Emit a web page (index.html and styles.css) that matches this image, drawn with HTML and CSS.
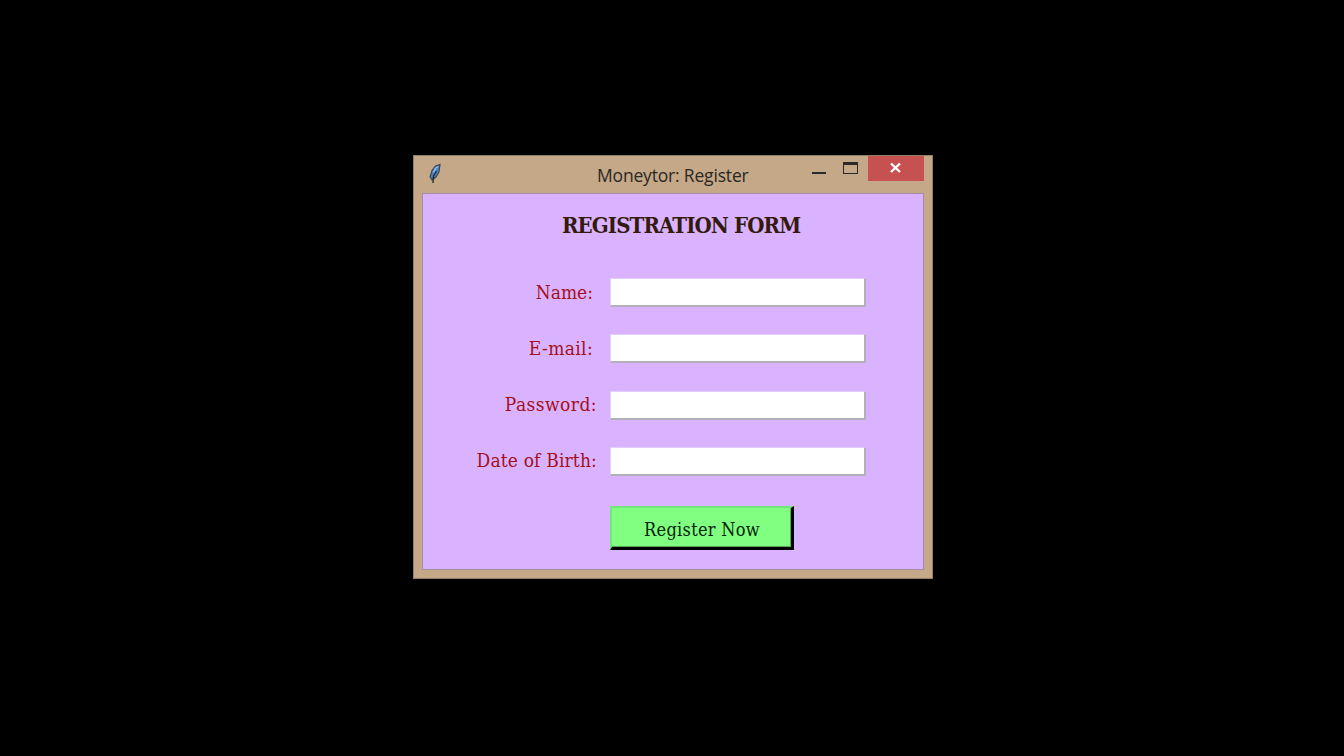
FILE: index.html
```html
<!DOCTYPE html>
<html lang="en">
<head>
<meta charset="utf-8">
<title>Moneytor: Register</title>
<link rel="stylesheet" href="styles.css">
</head>
<body>
<main class="window">
  <header class="titlebar">
    <svg class="feather" width="14" height="22" viewBox="0 0 14 22">
      <path d="M12 1.5 L7.5 3 L4 7.5 L2 14 L4 17 L8 14 L11 9 Z" fill="#4a82c4" stroke="#3a4350" stroke-width="1.1"/>
      <path d="M10 3.5 L7.5 5.5 L5.5 9.5" fill="none" stroke="#8abdf0" stroke-width="1.6"/>
      <path d="M8.5 8 L5.5 13 L5 20" fill="none" stroke="#25231f" stroke-width="1.3"/>
    </svg>
    <span class="caption">Moneytor: Register</span>
    <div class="controls">
      <svg width="112" height="25" viewBox="0 0 112 25">
        <rect x="0" y="16" width="14" height="2" fill="#2a2a2a"/>
        <path d="M31 6h15v12H31z M32 9v8h13V9z" fill="#2a2a2a" fill-rule="evenodd"/>
        <rect x="56" y="0" width="56" height="25" fill="#c75050"/>
        <path d="M79 7.5 L88 16 M88 7.5 L79 16" stroke="#fff" stroke-width="2.4"/>
      </svg>
    </div>
  </header>
  <form class="form">
    <h1 class="heading">REGISTRATION FORM</h1>
    <label class="row"><span class="label short name">Name:</span><input class="field" type="text"></label>
    <label class="row"><span class="label short email">E-mail:</span><input class="field" type="text"></label>
    <label class="row"><span class="label password">Password:</span><input class="field" type="text"></label>
    <label class="row"><span class="label birth">Date of Birth:</span><input class="field" type="text"></label>
    <button class="submit" type="button">Register Now</button>
  </form>
</main>
</body>
</html>
```
FILE: styles.css
```css
* { box-sizing: border-box; }
body {
  margin: 0;
  height: 756px;
  padding: 155px 0 0 413px;
  background: #000;
  overflow: hidden;
}
.window {
  width: 520px;
  height: 424px;
  padding: 0 8px;
  background: #c4a888;
  border: 1px solid #927d66;
}
.titlebar {
  display: grid;
  grid-template-columns: 126px 1fr 112px;
  height: 37px;
}
.feather { margin: 7px 0 0 6px; }
.caption {
  margin-left: 49px;
  padding-top: 6px;
  white-space: nowrap;
  font: 17.5px/26px "Open Sans", sans-serif;
  letter-spacing: -0.18px;
  color: #2b2722;
}
.controls { height: 25px; }
.controls svg { display: block; }
.form {
  width: 502px;
  height: 377px;
  border: 1px solid #a48ba8;
  background: #d9b3ff;
  font-family: "DejaVu Serif Condensed", "DejaVu Serif", serif;
}
.heading {
  margin: 0 0 0 139px;
  height: 70px;
  padding-top: 15px;
  font: bold 22px/32px "DejaVu Serif Condensed", "DejaVu Serif", serif;
  font-stretch: condensed;
  letter-spacing: -0.88px;
  white-space: nowrap;
  color: #331a0d;
}
.row {
  display: grid;
  grid-template-columns: 174px 256px;
  column-gap: 13px;
  align-items: center;
  height: 56.25px;
}
.label {
  padding-bottom: 1px;
  text-align: right;
  font-size: 19px;
  font-stretch: condensed;
  line-height: 28px;
  white-space: nowrap;
  color: #a40f1c;
}
.short { padding-right: 4px; }
.email { letter-spacing: 0.35px; }
.password { letter-spacing: 0.45px; }
.birth { letter-spacing: 0.16px; }
.field {
  width: 256px;
  height: 29px;
  margin: 1px 0 0;
  padding: 2px;
  background: #fff;
  border: 1px solid #e4ccfb;
  border-right: 2px solid #b5afba;
  border-bottom: 2px solid #b5afba;
}
.submit {
  display: block;
  width: 184px;
  height: 44px;
  margin: 17px 0 0 187px;
  padding: 4px 0 0 1px;
  background: #80ff80;
  border: 2px solid #73e47f;
  border-right: 3px solid #000;
  border-bottom: 3px solid #000;
  box-shadow: inset -1px -1px #54a854;
  font: 18px/34px "DejaVu Serif Condensed", "DejaVu Serif", serif;
  font-stretch: condensed;
  letter-spacing: 0.3px;
  color: #06230b;
}
```
